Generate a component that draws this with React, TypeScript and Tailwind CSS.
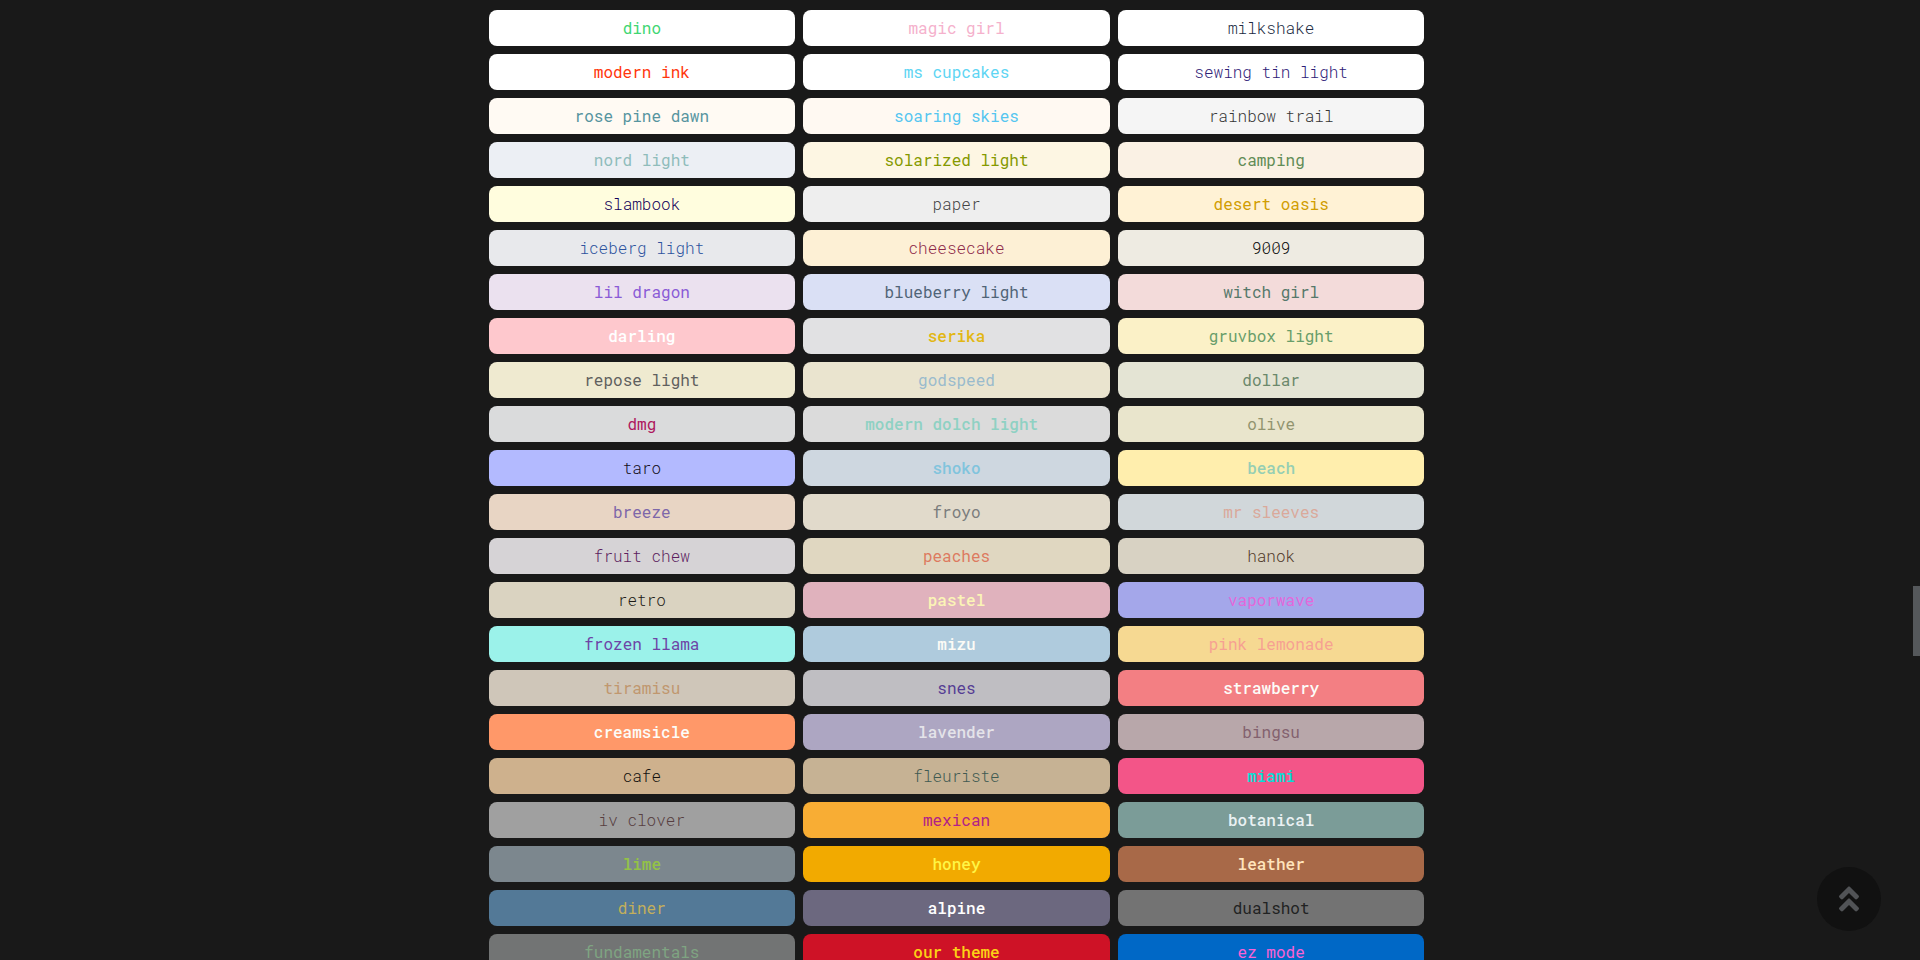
import { FaAngleDoubleUp } from "react-icons/fa";

type Theme = { name: string; colors: string };

const themes: Theme[] = [
  { name: "dino", colors: "bg-[#ffffff] text-[#40d672]" },
  { name: "magic girl", colors: "bg-[#ffffff] text-[#f5b1cc]" },
  { name: "milkshake", colors: "bg-[#ffffff] text-[#212b43] font-light" },
  { name: "modern ink", colors: "bg-[#ffffff] text-[#ff360d]" },
  { name: "ms cupcakes", colors: "bg-[#ffffff] text-[#5ed5f3]" },
  { name: "sewing tin light", colors: "bg-[#ffffff] text-[#2d2076] font-light" },
  { name: "rose pine dawn", colors: "bg-[#fffaf3] text-[#56949f]" },
  { name: "soaring skies", colors: "bg-[#fff9f2] text-[#55c6f0]" },
  { name: "rainbow trail", colors: "bg-[#f5f5f5] text-[#363636] font-light" },
  { name: "nord light", colors: "bg-[#eceff4] text-[#8fbcbb]" },
  { name: "solarized light", colors: "bg-[#fdf6e3] text-[#859900]" },
  { name: "camping", colors: "bg-[#faf1e4] text-[#618c56]" },
  { name: "slambook", colors: "bg-[#fffdde] text-[#13005a] font-light" },
  { name: "paper", colors: "bg-[#eeeeee] text-[#444444] font-light" },
  { name: "desert oasis", colors: "bg-[#fff2d5] text-[#d19d01]" },
  { name: "iceberg light", colors: "bg-[#e8e9ec] text-[#2d539e] font-light" },
  { name: "cheesecake", colors: "bg-[#fdf0d5] text-[#8e2949] font-light" },
  { name: "9009", colors: "bg-[#eeebe2] text-[#080909] font-light" },
  { name: "lil dragon", colors: "bg-[#ebe1ef] text-[#8a5bd6]" },
  { name: "blueberry light", colors: "bg-[#dae0f5] text-[#506477]" },
  { name: "witch girl", colors: "bg-[#f3dbda] text-[#56786a]" },
  { name: "darling", colors: "bg-[#fec8cd] text-[#ffffff] font-medium" },
  { name: "serika", colors: "bg-[#e1e1e3] text-[#e2b714] font-medium" },
  { name: "gruvbox light", colors: "bg-[#fbf1c7] text-[#689d6a]" },
  { name: "repose light", colors: "bg-[#efead0] text-[#5f605e]" },
  { name: "godspeed", colors: "bg-[#eae4cf] text-[#9abbcd]" },
  { name: "dollar", colors: "bg-[#e4e4d4] text-[#6b886b]" },
  { name: "dmg", colors: "bg-[#dadbdc] text-[#ae185e]" },
  { name: "modern dolch light\u00a0", colors: "bg-[#dbdbdb] text-[#8fd1c3] font-medium" },
  { name: "olive", colors: "bg-[#e9e5cc] text-[#92946f]" },
  { name: "taro", colors: "bg-[#b3baff] text-[#130f1a] font-light" },
  { name: "shoko", colors: "bg-[#ced7e0] text-[#81c4dd] font-medium" },
  { name: "beach", colors: "bg-[#ffeead] text-[#96ceb4] font-medium" },
  { name: "breeze", colors: "bg-[#e8d5c4] text-[#7d67a9]" },
  { name: "froyo", colors: "bg-[#e1dacb] text-[#7b7d7d]" },
  { name: "mr sleeves", colors: "bg-[#d1d7da] text-[#daa99b]" },
  { name: "fruit chew", colors: "bg-[#d6d3d6] text-[#5c1e5f] font-light" },
  { name: "peaches", colors: "bg-[#e0d7c1] text-[#dd7a5f]" },
  { name: "hanok", colors: "bg-[#d8d2c3] text-[#513a2a] font-light" },
  { name: "retro", colors: "bg-[#dad3c1] text-[#1d1b17] font-light" },
  { name: "pastel", colors: "bg-[#e0b2bd] text-[#fbf4b6] font-medium" },
  { name: "vaporwave", colors: "bg-[#a4a7ea] text-[#e368da]" },
  { name: "frozen llama", colors: "bg-[#9bf2ea] text-[#6d44a6]" },
  { name: "mizu", colors: "bg-[#afcbdd] text-[#fcfbf6] font-medium" },
  { name: "pink lemonade", colors: "bg-[#f6d992] text-[#f6a192]" },
  { name: "tiramisu", colors: "bg-[#cfc6b9] text-[#c0976f]" },
  { name: "snes", colors: "bg-[#bfbec2] text-[#553d94]" },
  { name: "strawberry", colors: "bg-[#f37f83] text-[#fcfcf8] font-medium" },
  { name: "creamsicle", colors: "bg-[#ff9869] text-[#fcfcf8] font-medium" },
  { name: "lavender", colors: "bg-[#ada6c2] text-[#e4e3e9] font-medium" },
  { name: "bingsu", colors: "bg-[#b8a7aa] text-[#83616e]" },
  { name: "cafe", colors: "bg-[#ceb18d] text-[#14120f] font-light" },
  { name: "fleuriste", colors: "bg-[#c6b294] text-[#405a52] font-light" },
  { name: "miami", colors: "bg-[#f35588] text-[#05dfd7] font-medium" },
  { name: "iv clover", colors: "bg-[#a0a0a0] text-[#573e40] font-light" },
  { name: "mexican", colors: "bg-[#f8ad34] text-[#b12189]" },
  { name: "botanical", colors: "bg-[#7b9c98] text-[#eaf1f3] font-medium" },
  { name: "lime", colors: "bg-[#7c878e] text-[#93c247] font-medium" },
  { name: "honey", colors: "bg-[#f2aa00] text-[#fff546] font-medium" },
  { name: "leather", colors: "bg-[#a86948] text-[#ffe4bc] font-medium" },
  { name: "diner", colors: "bg-[#537997] text-[#c3af5b]" },
  { name: "alpine", colors: "bg-[#6c687f] text-[#ffffff] font-medium" },
  { name: "dualshot", colors: "bg-[#737373] text-[#212222]" },
  { name: "fundamentals", colors: "bg-[#727474] text-[#7fa482]" },
  { name: "our theme", colors: "bg-[#ce1226] text-[#fcd116] font-medium" },
  { name: "ez mode", colors: "bg-[#0068c6] text-[#fa62d5]" },
];

function ThemeButton({ name, colors }: Theme) {
  return (
    <button type="button" className={`h-9 cursor-pointer rounded-lg text-center ${colors}`}>
      {name}
    </button>
  );
}

export default function App() {
  return (
    <div className="flex h-screen overflow-hidden bg-[#191919] font-['Roboto_Mono','Liberation_Mono',monospace] text-base">
      <main className="min-w-0 flex-1">
        <div className="mx-auto grid w-full max-w-[936px] grid-cols-3 gap-2 pt-[10px]">
          {themes.map((theme) => (
            <ThemeButton key={theme.name} {...theme} />
          ))}
        </div>
      </main>
      <div aria-hidden="true" className="grid w-[7px] grid-rows-[586fr_70fr_304fr]">
        <div className="row-start-2 bg-[#55585b]" />
      </div>
      <button
        type="button"
        aria-label="Scroll to top"
        className="fixed right-[39px] bottom-[29px] flex size-16 cursor-pointer items-center justify-center rounded-full bg-[#111111] text-[32px] text-[#515356]"
      >
        <FaAngleDoubleUp />
      </button>
    </div>
  );
}
